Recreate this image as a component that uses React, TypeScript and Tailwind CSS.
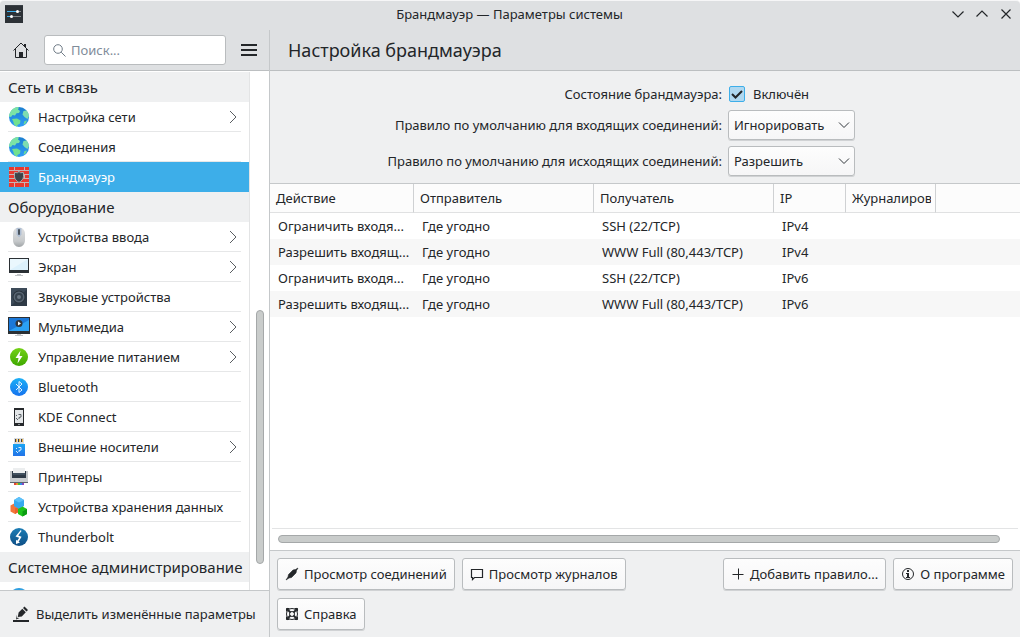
import { useState } from 'react';
import type { ReactNode } from 'react';

const GlobeIcon = () => (
  <svg viewBox="0 0 22 22" className="size-[22px]">
    <defs>
      <linearGradient id="globe" x1="0" y1="0" x2="0" y2="1">
        <stop offset="0" stopColor="#1c7fd0" />
        <stop offset="1" stopColor="#2f9cf6" />
      </linearGradient>
    </defs>
    <circle cx="11" cy="11" r="10" fill="url(#globe)" />
    <path
      d="M2 7c1-3 4-5.600 7.500-6l1.500.6-1 1.800 2 1.600-1 2-2.500.2L7 9.500 4.500 9 3 11l-2-.5C1 9 1.400 8 2 7z"
      fill="#7be3a6"
    />
    <path d="M4 13l5-.5 3.500 2-.5 3-2.500 1.500-.5 1.700C6.500 19.800 5.500 18 5.500 16z" fill="#72e08f" />
    <path d="M15.500 5l3-.5c1.500 1.800 2.300 3.600 2.500 5.500l-1.500 3-3-2-2-2.500z" fill="#7fdcb0" />
    <path d="M16.500 15l2.500-.5-1.500 3.200-2 .8z" fill="#6edb98" />
  </svg>
);

const FirewallIcon = () => (
  <svg viewBox="0 0 22 22" className="size-[22px]">
    <path fill="#c9b3b3" d="M1 1h20v20H1z" />
    <path
      fill="#e8392f"
      d="M1 1h5v3H1zM7 1h9v3H7zM17 1h4v3h-4zM1 5h9v3H1zM11 5h10v3H11zM1 9h5v3H1zM7 9h9v3H7zM17 9h4v3h-4zM1 13h9v3H1zM11 13h10v3H11zM1 17h5v4H1zM7 17h9v4H7zM17 17h4v4h-4z"
    />
    <path
      d="M11 5.500l1.500 1.200 3-.2v4c0 2.600-2 4.500-4.500 6-2.500-1.500-4.500-3.400-4.500-6v-4l3 .2z"
      fill="#3d4449"
      stroke="#a9adaf"
      strokeWidth="1"
    />
  </svg>
);

const MouseIcon = () => (
  <svg viewBox="0 0 22 22" className="size-[22px]">
    <defs>
      <linearGradient id="mouse" x1="0" y1="0" x2="0" y2="1">
        <stop offset="0" stopColor="#dfe1e3" />
        <stop offset=".7" stopColor="#c6c9cb" />
        <stop offset="1" stopColor="#9fa3a6" />
      </linearGradient>
    </defs>
    <path d="M5 8c0-4 2.500-6.500 6-6.500S17 4 17 8v6c0 4-2.500 7-6 7s-6-3-6-7z" fill="url(#mouse)" />
    <path d="M8.500 2h5v6.500l-2.500 3-2.500-3z" fill="#b1c0d4" />
    <rect x="10" y="3" width="2" height="6" rx="1" fill="#4b5560" />
  </svg>
);

const ScreenIcon = () => (
  <svg viewBox="0 0 22 22" className="size-[22px]">
    <path fill="#2b3034" d="M1 2h20v15H1z" />
    <path fill="#eaf7fd" d="M2 3h18v11H2z" />
    <path fill="#dcf1fc" d="M2 14L20 3v11z" />
    <path fill="#c2c5c7" d="M9 18h4v1h2v1H7v-1h2z" />
  </svg>
);

const SpeakerIcon = () => (
  <svg viewBox="0 0 22 22" className="size-[22px]">
    <path fill="#2f3b47" d="M3 2h16v18H3z" />
    <path fill="#475766" d="M3 2h16v1L4 19H3z" opacity=".6" />
    <circle cx="11" cy="11" r="6.500" fill="#28323b" />
    <circle cx="11" cy="11" r="5.500" fill="#596673" />
    <circle cx="11" cy="11" r="4" fill="#36424d" />
    <circle cx="11" cy="11" r="2" fill="#6c7884" />
  </svg>
);

const MultimediaIcon = () => (
  <svg viewBox="0 0 22 22" className="size-[22px]">
    <path fill="#2b3034" d="M0 1h22v17H0z" />
    <path fill="#1b78d8" d="M1 2h20v13H1z" />
    <path fill="#2ba0f2" d="M1 15L21 4v11z" />
    <circle cx="11" cy="7.500" r="3.500" fill="#31363b" />
    <path fill="#fff" d="M10 5.500l3 2-3 2z" />
    <path fill="#c2c5c7" d="M9 18h4v1h2v1H7v-1h2z" />
  </svg>
);

const PowerIcon = () => (
  <svg viewBox="0 0 22 22" className="size-[22px]">
    <defs>
      <linearGradient id="power" x1="0" y1="0" x2="0" y2="1">
        <stop offset="0" stopColor="#73d216" />
        <stop offset="1" stopColor="#3fa800" />
      </linearGradient>
    </defs>
    <circle cx="11" cy="11" r="9" fill="url(#power)" />
    <path d="M12.500 4.500l-5 7.500h3l-1 5.500 5-7.500h-3z" fill="#fff" />
  </svg>
);

const BluetoothIcon = () => (
  <svg viewBox="0 0 22 22" className="size-[22px]">
    <defs>
      <linearGradient id="bluetooth" x1="0" y1="0" x2="0" y2="1">
        <stop offset="0" stopColor="#1cb0f6" />
        <stop offset="1" stopColor="#1673ee" />
      </linearGradient>
    </defs>
    <circle cx="11" cy="11" r="9" fill="url(#bluetooth)" />
    <path d="M8 8l6 6-3 2.500v-11L14 8l-6 6" fill="none" stroke="#e6f4ff" strokeWidth="1" />
  </svg>
);

const PhoneIcon = () => (
  <svg viewBox="0 0 22 22" className="size-[22px]">
    <path fill="#26292c" d="M6 2h10v18H6z" />
    <path fill="#e3e6e8" d="M7 4h8v13H7z" />
    <path fill="#8d9296" d="M10 18h2v1h-2z" />
    <path fill="#5a6167" d="M8 9h1v1H8zM8 12h1v1H8zM9 14h1v-1H9z" />
    <path d="M10.500 8.500h2.500v2.500l-2 .5v1.500" fill="none" stroke="#5a6167" />
  </svg>
);

const UsbIcon = () => (
  <svg viewBox="0 0 22 22" className="size-[22px]">
    <defs>
      <linearGradient id="usb" x1="0" y1="0" x2="0" y2="1">
        <stop offset="0" stopColor="#1aa5f3" />
        <stop offset="1" stopColor="#2373e8" />
      </linearGradient>
    </defs>
    <path fill="#dadcde" d="M6 2h10v6H6z" />
    <path fill="#3d3f41" d="M7 3h2v3H7zM10 3h2v3h-2zM13 3h2v3h-2z" />
    <path fill="#f5b63c" d="M8 3h1v3H8zM11 3h1v3h-1zM14 3h1v3h-1z" />
    <path fill="url(#usb)" d="M5 8h12v12H5z" />
    <path fill="#d9ecfd" d="M8 12h1v1H8zM8 15h1v1H8zM9 17h1v-1H9z" />
    <path d="M10.500 11.500h2.500v2.500l-2 .5v1.500" fill="none" stroke="#d9ecfd" />
  </svg>
);

const PrinterIcon = () => (
  <svg viewBox="0 0 22 22" className="size-[22px]">
    <path fill="#c3c7ca" d="M2 5h2v8H2zM18 5h2v8h-2z" />
    <path fill="#eceeef" d="M5 2h12v6H5z" />
    <path fill="#2e3a47" d="M4 5h1v2h12V5h1v7H4z" />
    <path fill="#415160" d="M5 7h12v2H5z" />
    <path fill="#c9cdd0" d="M2 12h18v4H2z" />
    <path fill="#5d656c" d="M2 16h18v1H2z" />
    <path fill="#e0443c" d="M6 17h2v2H6z" />
    <path fill="#f0932b" d="M8 17h2v2H8z" />
    <path fill="#48b83a" d="M10 17h2v2h-2z" />
    <path fill="#2f8fe8" d="M12 17h2v2h-2z" />
    <path fill="#8a48c0" d="M14 17h2v2h-2z" />
  </svg>
);

const StorageIcon = () => (
  <svg viewBox="0 0 22 22" className="size-[22px]">
    <path fill="#f4753a" d="M2.500 9.500L7 7l4.500 2.500v6L7 18l-4.500-2.500z" />
    <path fill="#e8622c" d="M7 12.500l4.500-2v5L7 18z" />
    <path fill="#36a9ef" d="M6 4l5-3 5 3v6l-5 3-5-3z" />
    <path fill="#5cc1fa" d="M6 4l5-3 5 3-5 2.500z" />
    <path fill="#1dc41b" d="M10 13l4.500-2.500 4.500 2.500v5l-4.500 2.500L10 18z" />
    <path fill="#0b9c12" d="M14.500 15.500L19 13v5l-4.500 2.500z" />
  </svg>
);

const ThunderboltIcon = () => (
  <svg viewBox="0 0 22 22" className="size-[22px]">
    <defs>
      <linearGradient id="thunder" x1="0" y1="0" x2="0" y2="1">
        <stop offset="0" stopColor="#1b7db5" />
        <stop offset="1" stopColor="#0f4f86" />
      </linearGradient>
    </defs>
    <circle cx="11" cy="11" r="9" fill="url(#thunder)" />
    <path d="M12.800 4L7.500 10.500l3.700 1.200-2 3L8 13.800V18l4-1.500-1.400-.8 3-5-3.400-1.200L13.500 5z" fill="#fff" />
  </svg>
);

type Item = { label: string; icon: () => ReactNode; more?: boolean };

const sections: { title: string; items: Item[] }[] = [
  {
    title: 'Сеть и связь',
    items: [
      { label: 'Настройка сети', icon: GlobeIcon, more: true },
      { label: 'Соединения', icon: GlobeIcon },
      { label: 'Брандмауэр', icon: FirewallIcon },
    ],
  },
  {
    title: 'Оборудование',
    items: [
      { label: 'Устройства ввода', icon: MouseIcon, more: true },
      { label: 'Экран', icon: ScreenIcon, more: true },
      { label: 'Звуковые устройства', icon: SpeakerIcon },
      { label: 'Мультимедиа', icon: MultimediaIcon, more: true },
      { label: 'Управление питанием', icon: PowerIcon, more: true },
      { label: 'Bluetooth', icon: BluetoothIcon },
      { label: 'KDE Connect', icon: PhoneIcon },
      { label: 'Внешние носители', icon: UsbIcon, more: true },
      { label: 'Принтеры', icon: PrinterIcon },
      { label: 'Устройства хранения данных', icon: StorageIcon },
      { label: 'Thunderbolt', icon: ThunderboltIcon },
    ],
  },
];

const rules = [
  ['Ограничить входя...', 'Где угодно', 'SSH (22/TCP)', 'IPv4'],
  ['Разрешить входящ...', 'Где угодно', 'WWW Full (80,443/TCP)', 'IPv4'],
  ['Ограничить входя...', 'Где угодно', 'SSH (22/TCP)', 'IPv6'],
  ['Разрешить входящ...', 'Где угодно', 'WWW Full (80,443/TCP)', 'IPv6'],
];

function TitleBar() {
  return (
    <header className="flex h-[30px] shrink-0 items-center rounded-t border-t border-[#f6f6f7] bg-[#dee0e2] px-[5px] pb-[3px]">
      <div className="flex-1">
        <svg viewBox="0 0 18 18" className="size-[18px]">
          <path fill="#2c3136" d="M0 0h18v18H0z" />
          <path fill="#3b4147" d="M0 0h18v1H0z" />
          <path fill="#3daee9" d="M2 6h10v1H2zM2 11h4v1H2z" />
          <path fill="#80868a" d="M14 6h2v1h-2zM8 11h8v1H8z" />
          <circle cx="12.500" cy="6.500" r="1.500" fill="#fff" />
          <circle cx="6.500" cy="11.500" r="1.500" fill="#fff" />
        </svg>
      </div>
      <h1>Брандмауэр — Параметры системы</h1>
      <div className="flex flex-1 justify-end gap-2 pr-px">
        <button type="button" aria-label="Свернуть">
          <svg viewBox="0 0 16 16" className="size-4" fill="none" stroke="#232629" strokeWidth="1.200">
            <path d="M2.500 5.500L8 11l5.500-5.500" />
          </svg>
        </button>
        <button type="button" aria-label="Развернуть">
          <svg viewBox="0 0 16 16" className="size-4" fill="none" stroke="#232629" strokeWidth="1.200">
            <path d="M2.500 10.500L8 5l5.500 5.500" />
          </svg>
        </button>
        <button type="button" aria-label="Закрыть">
          <svg viewBox="0 0 16 16" className="size-4" fill="none" stroke="#232629" strokeWidth="1.200">
            <path d="M3.500 3.500l9 9M12.500 3.500l-9 9" />
          </svg>
        </button>
      </div>
    </header>
  );
}

function SidebarItem({ item, active, last, onSelect }: { item: Item; active: boolean; last: boolean; onSelect: () => void }) {
  const Icon = item.icon;
  return (
    <li className={active ? 'bg-[#3daee9] text-white' : 'text-[#232629]'}>
      <button type="button" onClick={onSelect} className="block w-full px-2 text-left">
        <span className={`flex h-[30px] items-center gap-2 border-b ${active || last ? 'border-transparent' : 'border-[#e6e7e8]'}`}>
          <Icon />
          <span className="flex-1 whitespace-nowrap">{item.label}</span>
          {item.more && (
            <svg viewBox="0 0 16 16" className="size-4" fill="none" stroke="#5a5e62">
              <path d="M5 2l6 6-6 6" />
            </svg>
          )}
        </span>
      </button>
    </li>
  );
}

function Sidebar() {
  const [selected, setSelected] = useState('Брандмауэр');

  return (
    <aside className="flex w-[270px] shrink-0 flex-col border-r border-[#c5c8ca]">
      <div className="flex h-[41px] shrink-0 items-center border-b border-[#bcbfc1] bg-[#dee0e2] pl-[13px] pr-3">
        <button type="button" aria-label="Домой">
          <svg viewBox="0 0 16 16" className="size-4" fill="none" stroke="#232629">
            <path d="M.5 8.500L8 1l7.500 7.500M2.500 7v8.500h11V7" />
            <path d="M6 10h4v5H6zM11 2h2v4l-2-2z" fill="#232629" stroke="none" />
          </svg>
        </button>
        <label className="ml-[15px] flex h-[30px] min-w-0 flex-1 items-center gap-[5px] rounded-[3px] border border-[#b9bcbe] bg-white px-2">
          <svg viewBox="0 0 13 13" className="size-[13px]" fill="none" stroke="#6f7b86">
            <circle cx="5" cy="5" r="4.300" />
            <path d="M8.200 8.200l4.300 4.300" />
          </svg>
          <input
            type="text"
            aria-label="Поиск"
            placeholder="Поиск..."
            className="min-w-0 flex-1 outline-none placeholder:text-[#7f8c9a]"
          />
        </label>
        <button type="button" aria-label="Меню" className="ml-[15px]">
          <svg viewBox="0 0 16 16" className="size-4" fill="#232629">
            <path d="M0 2h16v2H0zM0 7h16v2H0zM0 12h16v2H0z" />
          </svg>
        </button>
      </div>

      <div className="flex min-h-0 flex-1 bg-white pt-px">
        <nav className="min-w-0 flex-1 overflow-hidden border-r border-[#e3e4e5]">
          {sections.map((section) => (
            <section key={section.title}>
              <h2 className="h-[30px] bg-[#eff0f1] px-2 text-[15px] leading-[30px]">{section.title}</h2>
              <ul>
                {section.items.map((item, i) => (
                  <SidebarItem
                    key={item.label}
                    item={item}
                    active={item.label === selected}
                    last={i === section.items.length - 1}
                    onSelect={() => setSelected(item.label)}
                  />
                ))}
              </ul>
            </section>
          ))}
          <h2 className="h-[30px] whitespace-nowrap bg-[#eff0f1] px-2 text-[15px] leading-[30px]">
            Системное администрирование
          </h2>
          <div className="px-2 pt-[5px]">
            <svg viewBox="0 0 22 22" className="size-[22px]">
              <circle cx="11" cy="11" r="10" fill="#2f9fe0" />
            </svg>
          </div>
        </nav>
        <div className="flex w-[19px] shrink-0 flex-col items-center pb-[26px]">
          <div className="flex-[239]" />
          <div className="w-2 flex-[254] rounded-full border border-[#a5a8a9] bg-[#c9cccb]" />
        </div>
      </div>

      <button
        type="button"
        className="flex h-[47px] shrink-0 items-center gap-1.5 whitespace-nowrap border-t border-[#c5c8ca] bg-[#eff0f1] pl-3"
      >
        <svg viewBox="0 0 18 18" className="size-[18px]" fill="#232629">
          <path d="M1 15h16v2H1z" />
          <path d="M12.500 1.500l3.500 3.500-1.500 1.500L11 3zM10.300 3.700l3.500 3.500-4 4.300-4 .5.800-4.500zM5 9.500v3.300l2.500.2L4 14.500z" />
        </svg>
        Выделить изменённые параметры
      </button>
    </aside>
  );
}

function PolicySelect({ id, label, options }: { id: string; label: string; options: string[] }) {
  return (
    <>
      <label htmlFor={id} className="text-right">
        {label}
      </label>
      <div className="relative w-[127px]">
        <select
          id={id}
          className="block h-[30px] w-full appearance-none rounded-[3px] border border-[#b9bcbe] bg-linear-to-b from-[#fdfdfd] to-[#f6f6f7] pl-[5px] pr-6 shadow-[0_1px_0_#d0d2d4]"
        >
          {options.map((option) => (
            <option key={option}>{option}</option>
          ))}
        </select>
        <svg
          viewBox="0 0 12 12"
          className="pointer-events-none absolute right-[5px] top-[9px] size-3"
          fill="none"
          stroke="#31363b"
        >
          <path d="M1 3.500l5 5 5-5" />
        </svg>
      </div>
    </>
  );
}

function RulesTable() {
  const th = 'overflow-hidden whitespace-nowrap border-r border-[#cfd1d3] pl-1.5 text-left font-normal';

  return (
    <div className="flex min-h-0 flex-1 flex-col border-y border-[#c5c8ca] bg-white">
      <div className="min-h-0 flex-1 overflow-hidden">
        <table className="w-full table-fixed border-separate border-spacing-0">
          <colgroup>
            <col className="w-[144px]" />
            <col className="w-[180px]" />
            <col className="w-[180px]" />
            <col className="w-[72px]" />
            <col className="w-[90px]" />
            <col />
          </colgroup>
          <thead>
            <tr className="h-[29px] bg-[#fcfcfc] [&>*]:border-b [&>*]:border-b-[#e0e1e2]">
              <th className={th}>Действие</th>
              <th className={th}>Отправитель</th>
              <th className={th}>Получатель</th>
              <th className={th}>IP</th>
              <th className={`${th} pr-1`}>
                <div className="overflow-hidden">Журналирование</div>
              </th>
              <td />
            </tr>
          </thead>
          <tbody>
            {rules.map((rule, i) => (
              <tr key={i} className="h-[26px] even:bg-[#f7f7f7]">
                {rule.map((cell, j) => (
                  <td key={j} className="whitespace-nowrap pl-2">
                    {cell}
                  </td>
                ))}
                <td colSpan={2} />
              </tr>
            ))}
          </tbody>
        </table>
      </div>
      <div className="mx-0.5 h-[22px] shrink-0 border-t border-[#e3e4e5] pl-1.5 pr-[18px] pt-1.5">
        <div className="h-2 rounded-full border border-[#a5a8a9] bg-[#c9cccb]" />
      </div>
    </div>
  );
}

function ActionButton({ icon, children }: { icon: ReactNode; children: ReactNode }) {
  return (
    <button
      type="button"
      className="flex h-8 items-center gap-1 whitespace-nowrap rounded-[3px] border border-[#b9bcbe] bg-linear-to-b from-[#fdfdfd] to-[#f6f6f7] pl-1.5 pr-[7px] shadow-[0_1px_0_#d0d2d4]"
    >
      <svg viewBox="0 0 16 16" className="size-4" fill="none" stroke="#232629">
        {icon}
      </svg>
      {children}
    </button>
  );
}

function FirewallPage() {
  const [enabled, setEnabled] = useState(true);

  return (
    <main className="flex min-w-0 flex-1 flex-col bg-[#eff0f1]">
      <div className="flex h-[41px] shrink-0 items-center border-b border-[#bcbfc1] bg-[#dee0e2] px-[18px]">
        <h2 className="text-lg">Настройка брандмауэра</h2>
      </div>

      <form className="grid shrink-0 grid-cols-[1fr_292px] items-center gap-1.5 pb-[7px] pt-[13px]">
        <label htmlFor="state" className="text-right">
          Состояние брандмауэра:
        </label>
        <div className="flex h-5 items-center gap-2 pl-px">
          <div className="relative size-4">
            <input
              id="state"
              type="checkbox"
              checked={enabled}
              onChange={(e) => setEnabled(e.target.checked)}
              className="block size-4 appearance-none rounded-[2px] border border-[#3daee9] bg-[#b0d8f0]"
            />
            {enabled && (
              <svg
                viewBox="0 0 16 16"
                className="pointer-events-none absolute inset-0 size-4"
                fill="none"
                stroke="#232629"
                strokeWidth="2"
              >
                <path d="M3 8l3.500 3.500L13 5" />
              </svg>
            )}
          </div>
          <label htmlFor="state">Включён</label>
        </div>
        <PolicySelect
          id="incoming"
          label="Правило по умолчанию для входящих соединений:"
          options={['Игнорировать', 'Разрешить', 'Отклонить']}
        />
        <PolicySelect
          id="outgoing"
          label="Правило по умолчанию для исходящих соединений:"
          options={['Разрешить', 'Игнорировать', 'Отклонить']}
        />
      </form>

      <RulesTable />

      <div className="flex shrink-0 items-start gap-[7px] p-[7px]">
        <div className="flex flex-1 flex-wrap gap-x-[7px] gap-y-2">
          <ActionButton
            icon={
              <path
                d="M14 2l-2.500 1.500-2.500.5L4.500 8.500 4 11l-2 3 3-2 2.500-.5L12 7l.5-2.500z"
                fill="#232629"
                strokeWidth=".6"
              />
            }
          >
            Просмотр соединений
          </ActionButton>
          <ActionButton icon={<path d="M2.500 3.500h11v8h-8l-2 2v-2h-1z" strokeWidth="1.200" />}>
            Просмотр журналов
          </ActionButton>
          <ActionButton
            icon={
              <>
                <circle cx="8" cy="8" r="5.500" />
                <circle cx="8" cy="8" r="2.500" />
                <path d="M2.500 2.500l4 4M13.500 2.500l-4 4M2.500 13.500l4-4M13.500 13.500l-4-4" strokeWidth="1.800" />
                <path d="M2.500 5.500v-3h3M10.500 2.500h3v3M13.500 10.500v3h-3M5.500 13.500h-3v-3" />
              </>
            }
          >
            Справка
          </ActionButton>
        </div>
        <ActionButton icon={<path d="M2.500 8.500h11M8.500 2.500v11" />}>Добавить правило...</ActionButton>
        <ActionButton
          icon={
            <>
              <circle cx="8" cy="8" r="5.500" />
              <path d="M7 4h2v2H7zM6 7h3v4h1v1H6v-1h1V8H6z" fill="#232629" stroke="none" />
            </>
          }
        >
          О программе
        </ActionButton>
      </div>
    </main>
  );
}

export default function App() {
  return (
    <div className="flex h-screen flex-col bg-white font-['Noto_Sans',sans-serif] text-[13px] leading-5 text-[#232629]">
      <TitleBar />
      <div className="flex min-h-0 flex-1">
        <Sidebar />
        <FirewallPage />
      </div>
    </div>
  );
}
